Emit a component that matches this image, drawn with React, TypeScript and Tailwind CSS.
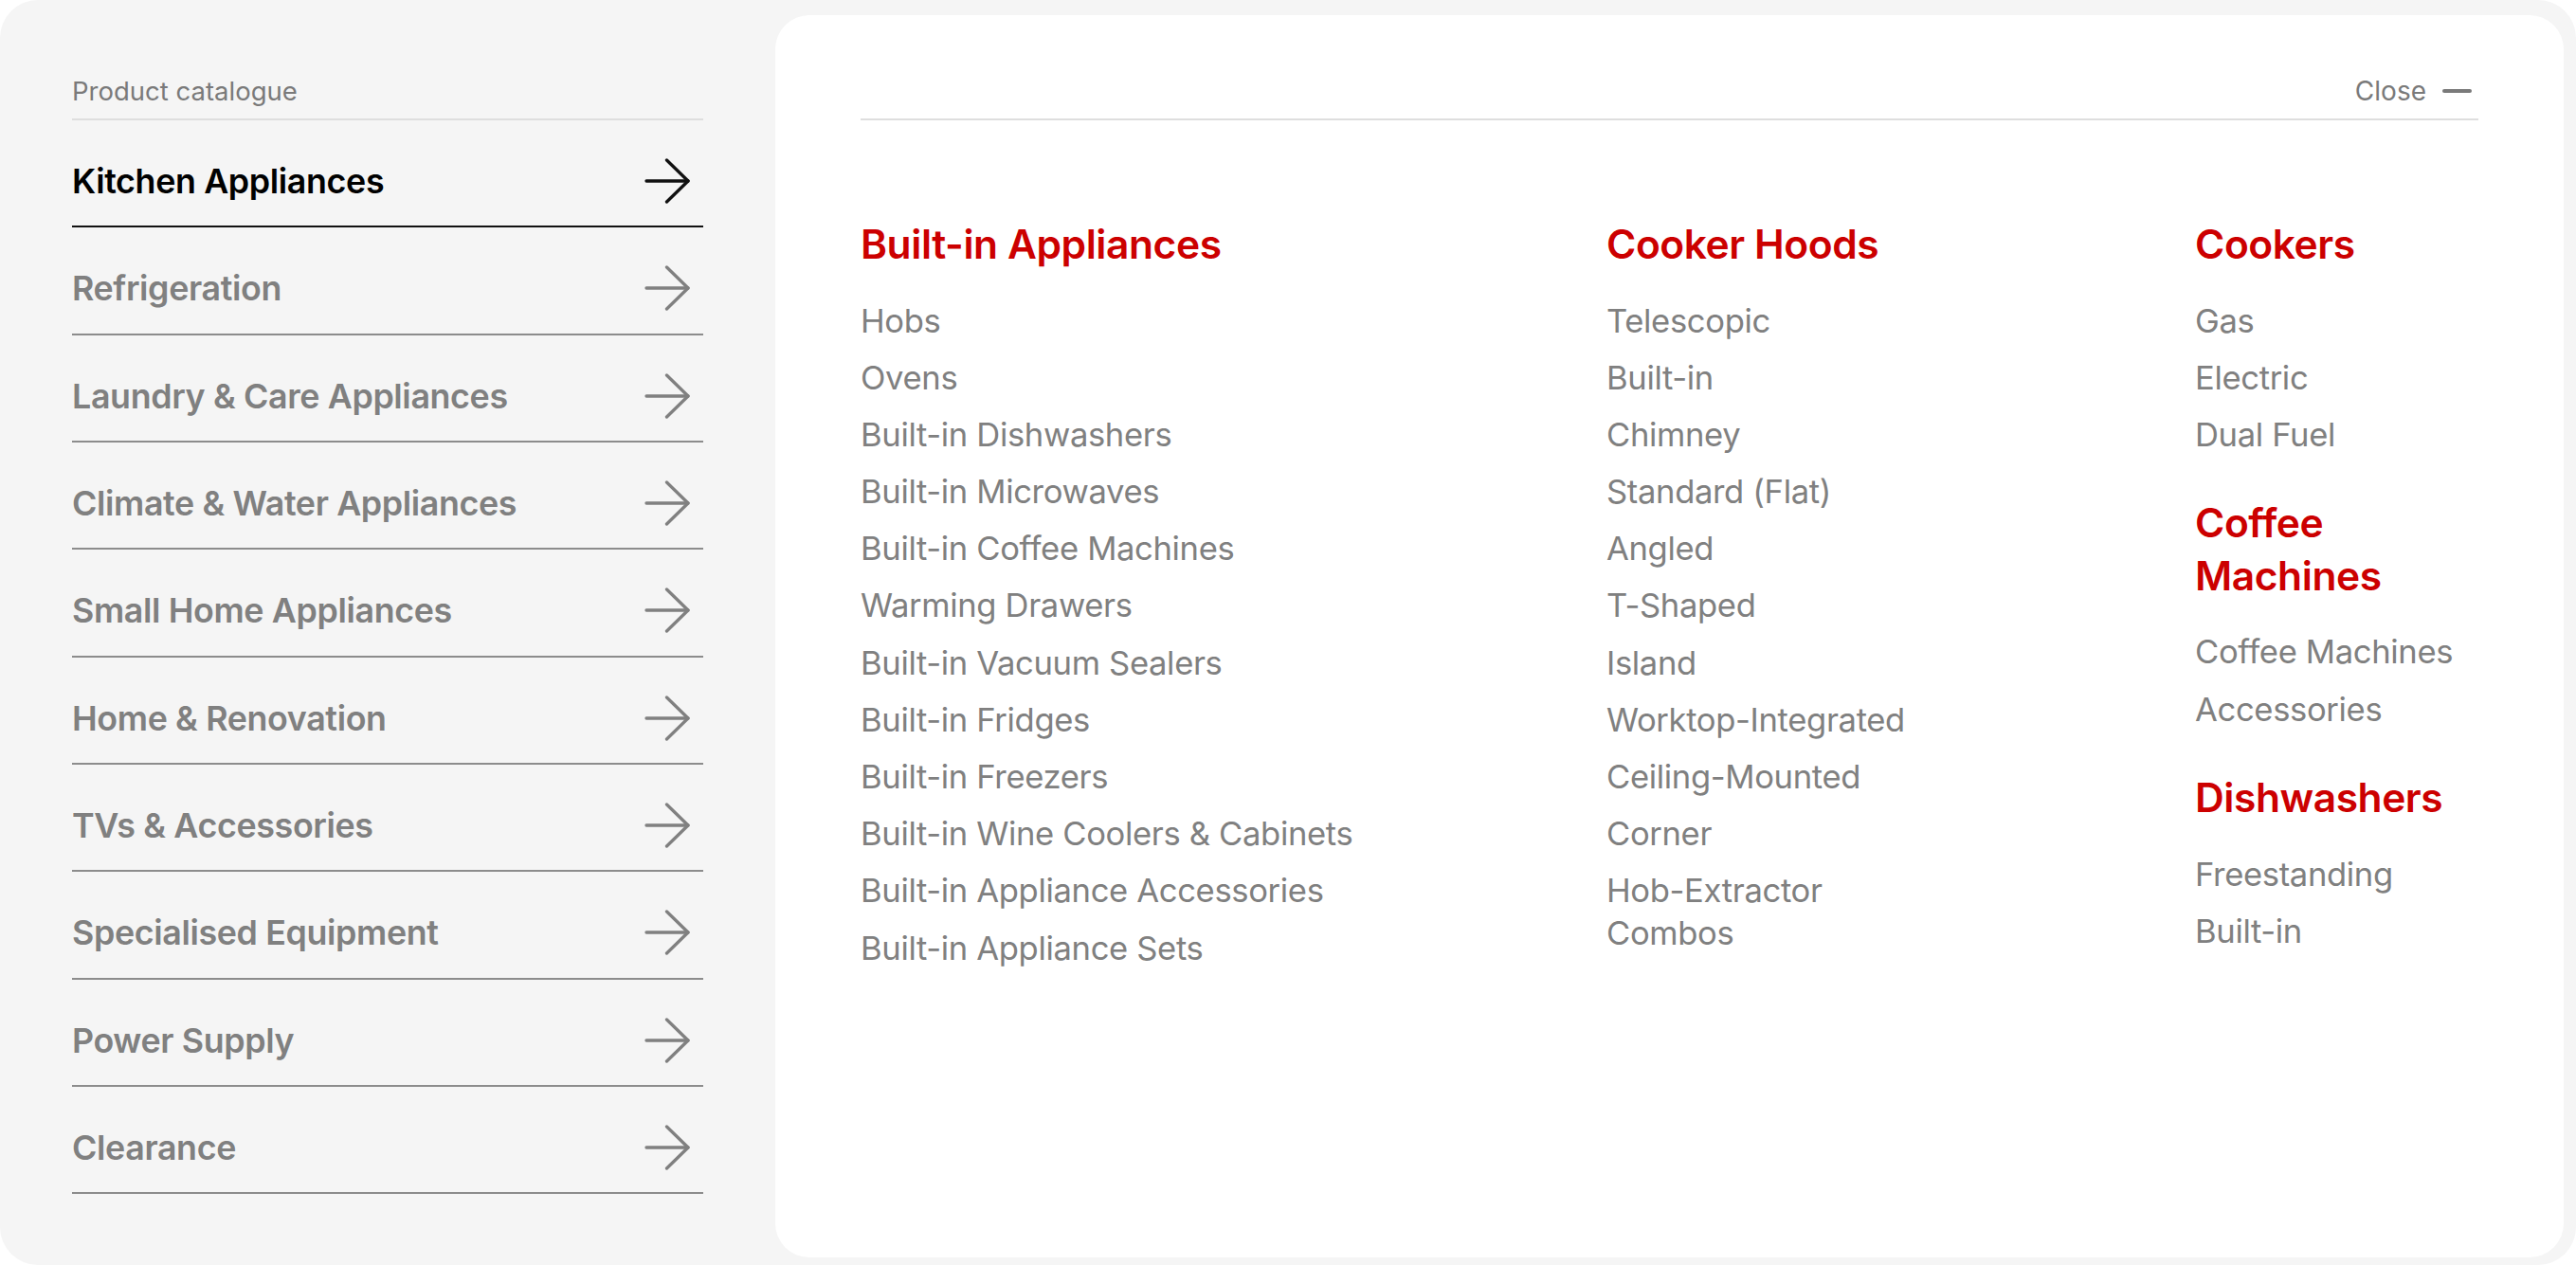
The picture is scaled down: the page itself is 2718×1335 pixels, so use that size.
import React from "react";

const nav = [
  "Kitchen Appliances",
  "Refrigeration",
  "Laundry & Care Appliances",
  "Climate & Water Appliances",
  "Small Home Appliances",
  "Home & Renovation",
  "TVs & Accessories",
  "Specialised Equipment",
  "Power Supply",
  "Clearance",
];

type Group = { title: string; items: string[] };

const columns: Group[][] = [
  [
    {
      title: "Built-in Appliances",
      items: [
        "Hobs",
        "Ovens",
        "Built-in Dishwashers",
        "Built-in Microwaves",
        "Built-in Coffee Machines",
        "Warming Drawers",
        "Built-in Vacuum Sealers",
        "Built-in Fridges",
        "Built-in Freezers",
        "Built-in Wine Coolers & Cabinets",
        "Built-in Appliance Accessories",
        "Built-in Appliance Sets",
      ],
    },
  ],
  [
    {
      title: "Cooker Hoods",
      items: [
        "Telescopic",
        "Built-in",
        "Chimney",
        "Standard (Flat)",
        "Angled",
        "T-Shaped",
        "Island",
        "Worktop-Integrated",
        "Ceiling-Mounted",
        "Corner",
        "Hob-Extractor Combos",
      ],
    },
  ],
  [
    { title: "Cookers", items: ["Gas", "Electric", "Dual Fuel"] },
    { title: "Coffee Machines", items: ["Coffee Machines", "Accessories"] },
    { title: "Dishwashers", items: ["Freestanding", "Built-in"] },
  ],
];

function Arrow({ dark }: { dark: boolean }) {
  return (
    <svg
      width="48"
      height="48"
      viewBox="0 0 48 48"
      fill="none"
      stroke={dark ? "#111111" : "#808080"}
      strokeWidth="3.3"
      strokeLinecap="round"
      strokeLinejoin="round"
    >
      <path d="M2 24H46" />
      <path d="M23.5 2L46 24L23.5 46" />
    </svg>
  );
}

function GroupBlock({ g }: { g: Group }) {
  return (
    <div>
      <h3 className="text-[42.5px] leading-[55.5px] font-semibold tracking-[-0.01em] text-[#cc0000]">
        {g.title}
      </h3>
      <ul className="mt-[30px] flex flex-col gap-[15.2px]">
        {g.items.map((it) => (
          <li key={it} className="text-[34.6px] leading-[45px] text-[#808080] tracking-[-0.01em]">
            {it}
          </li>
        ))}
      </ul>
    </div>
  );
}

export default function App() {
  return (
    <div className="bg-white h-[1335px] w-full" style={{ fontFamily: "Inter, 'Noto Sans', sans-serif" }}>
      <div className="h-full bg-[#f5f5f5] rounded-[40px] flex pl-[76px] pr-[13px] pt-[16px] pb-[8px] gap-[76px]">
        <aside className="w-[666px] shrink-0 pt-[63px]">
          <div className="text-[27.5px] leading-[34px] text-[#7a7a7a] pb-[12px] border-b-2 border-[#dedede]">
            Product catalogue
          </div>
          <nav className="flex flex-col">
            {nav.map((n, i) => (
              <div
                key={n}
                className={`flex items-center justify-between pt-[40px] pb-[23.35px] pr-[14px] border-b-2 ${
                  i === 0 ? "border-[#111111]" : "border-[#8c8c8c]"
                }`}
              >
                <span
                  className={`text-[35.8px] leading-[46px] font-semibold tracking-[-0.01em] ${
                    i === 0 ? "text-black" : "text-[#808080]"
                  }`}
                >
                  {n}
                </span>
                <Arrow dark={i === 0} />
              </div>
            ))}
          </nav>
        </aside>
        <main className="flex-1 bg-white rounded-[36px] px-[90px] pt-[63px]">
          <div className="flex items-center justify-end gap-[17px] pb-[12px] pr-[7px] border-b-2 border-[#dedede]">
            <span className="text-[28px] leading-[34px] text-[#7a7a7a]">Close</span>
            <span className="block w-[31px] h-[4px] rounded-full bg-[#7a7a7a]" />
          </div>
          <div className="mt-[103px] grid grid-cols-[527px_361px_298px] gap-x-[260px]">
            {columns.map((col, ci) => (
              <div key={ci} className="flex flex-col gap-[43.5px]">
                {col.map((g) => (
                  <GroupBlock key={g.title} g={g} />
                ))}
              </div>
            ))}
          </div>
        </main>
      </div>
    </div>
  );
}
